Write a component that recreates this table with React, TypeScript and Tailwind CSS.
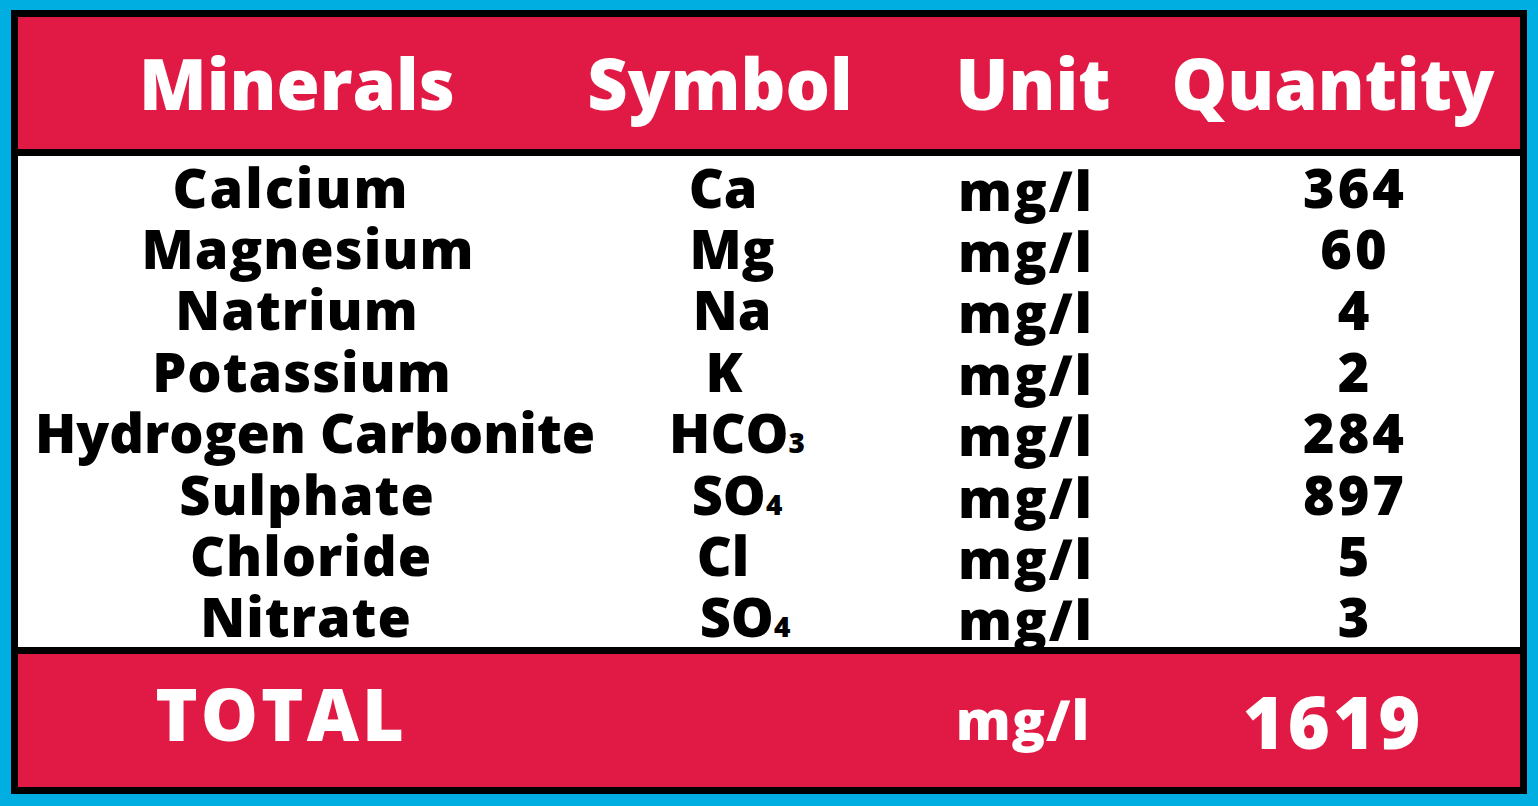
import React from 'react';

interface MineralRow {
  name: string;
  symbol: string;
  sub?: string;
  quantity: string;
  namePad: string;
  symbolPad: string;
}

const rows: MineralRow[] = [
  { name: 'Calcium', symbol: 'Ca', quantity: '364', namePad: 'pr-[28px] tracking-[2px]', symbolPad: 'pr-[18px]' },
  { name: 'Magnesium', symbol: 'Mg', quantity: '60', namePad: 'pl-[6px] tracking-[1px]', symbolPad: '' },
  { name: 'Natrium', symbol: 'Na', quantity: '4', namePad: 'pr-[16px] tracking-[1px]', symbolPad: '' },
  { name: 'Potassium', symbol: 'K', quantity: '2', namePad: 'pr-[6px] tracking-[1px]', symbolPad: 'pr-[16px]' },
  { name: 'Hydrogen Carbonite', symbol: 'HCO', sub: '3', quantity: '284', namePad: 'pl-[20px] tracking-normal', symbolPad: 'pl-[10px]' },
  { name: 'Sulphate', symbol: 'SO', sub: '4', quantity: '897', namePad: 'pl-[4px] tracking-[1px]', symbolPad: 'pl-[10px]' },
  { name: 'Chloride', symbol: 'Cl', quantity: '5', namePad: 'pl-[12px] tracking-[1px]', symbolPad: 'pr-[18px]' },
  { name: 'Nitrate', symbol: 'SO', sub: '4', quantity: '3', namePad: 'pl-[2px] tracking-[1px]', symbolPad: 'pl-[26px]' },
];

const font = { fontFamily: '"Open Sans", "DejaVu Sans", sans-serif' };

export default function App() {
  return (
    <div
      className="w-[1538px] h-[806px] bg-[#00aee2] pt-[10px] pl-[11px] pr-[11px] pb-[12px]"
      style={font}
    >
      <div className="h-full border-[7px] border-black bg-white flex flex-col overflow-hidden">
        {/* Header */}
        <div className="h-[132px] shrink-0 bg-[#e01a45] grid grid-cols-[558px_288px_338px_262px] items-center text-white text-[70px] font-extrabold leading-none whitespace-nowrap">
          <div className="flex justify-center">Minerals</div>
          <div className="flex justify-center">Symbol</div>
          <div className="flex justify-center">Unit</div>
          <div className="flex justify-center">Quantity</div>
        </div>

        <div className="h-[7px] shrink-0 bg-black" />

        {/* Body */}
        <div className="h-[491px] shrink-0 grid grid-rows-8 text-black text-[54px] font-extrabold leading-none whitespace-nowrap">
          {rows.map((row) => (
            <div key={row.name + row.quantity} className="grid grid-cols-[574px_280px_308px_350px] items-center">
              <div className={`flex justify-center ${row.namePad}`}>{row.name}</div>
              <div className={`flex justify-center items-baseline ${row.symbolPad}`}>
                {row.symbol}
                {row.sub && <span className="text-[28px]">{row.sub}</span>}
              </div>
              <div className="flex justify-center pt-[6px] tracking-[2px]">mg/l</div>
              <div className="flex justify-center tracking-[3px]">{row.quantity}</div>
            </div>
          ))}
        </div>

        <div className="h-[7px] shrink-0 bg-black" />

        {/* Footer */}
        <div className="flex-1 bg-[#e01a45] grid grid-cols-[526px_374px_210px_410px] items-center text-white font-extrabold leading-none whitespace-nowrap">
          <div className="flex justify-center text-[72px] tracking-[3px] pb-[16px]">TOTAL</div>
          <div />
          <div className="flex justify-center text-[55px] tracking-[1px] pb-[4px]">mg/l</div>
          <div className="flex justify-center text-[72px] tracking-[3px]">1619</div>
        </div>
      </div>
    </div>
  );
}
